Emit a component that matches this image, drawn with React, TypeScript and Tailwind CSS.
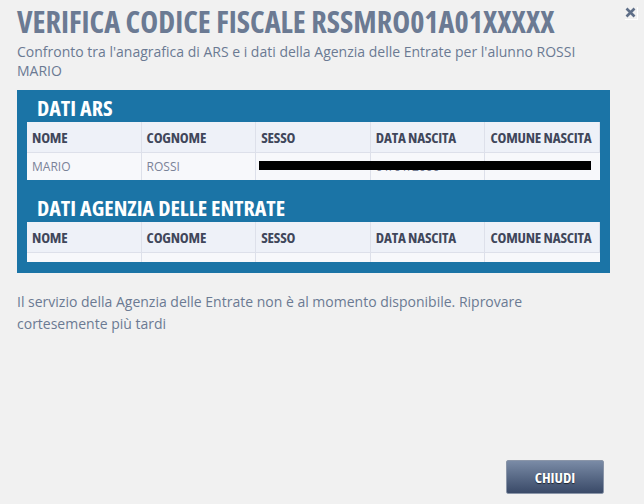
import React from 'react';

const columns = ['NOME', 'COGNOME', 'SESSO', 'DATA NASCITA', 'COMUNE NASCITA'];

const condensed = "font-['Open_Sans','DejaVu_Sans',sans-serif] font-bold font-stretch-condensed";

function DataTable({ values, rowHeight }: { values: string[]; rowHeight: string }) {
  return (
    <div className="relative mx-[10px] grid grid-cols-5 bg-[#f7f8fb]">
      {columns.map((col) => (
        <div
          key={col}
          className={`flex h-[31px] items-center whitespace-nowrap border-r border-b border-[#dde0ea] bg-[#eef1f8] px-[5px] text-[15px] tracking-[-0.2px] text-[#40465a] last:border-r-0 ${condensed}`}
        >
          {col}
        </div>
      ))}
      {values.map((v, i) => (
        <div
          key={i}
          className={`flex ${rowHeight} items-center border-r border-[#dde0ea] px-[5px] text-[12px] text-[#7a8298] last:border-r-0 font-['Open_Sans',sans-serif]`}
        >
          {v}
        </div>
      ))}
    </div>
  );
}

export default function App() {
  return (
    <div className="relative h-[504px] w-[644px] overflow-hidden bg-[#f1f1f1] font-['Open_Sans',sans-serif]">
      <button className="absolute right-[7px] top-[6px] flex h-[13px] w-[13px] items-center justify-center shadow-[1px_1px_0_#ffffff]">
        <svg width="11" height="11" viewBox="0 0 11 11">
          <path d="M1.5 1.5 L9.5 9.5 M9.5 1.5 L1.5 9.5" stroke="#5f6f88" strokeWidth="2.6" strokeLinecap="butt" />
        </svg>
      </button>

      <div className="pl-[17px] pr-[34px] pt-[3px]">
        <h1 className={`whitespace-nowrap text-[30.3px] leading-[38px] text-[#6b7a93] ${condensed}`}>
          VERIFICA CODICE FISCALE RSSMRO01A01XXXXX
        </h1>
        <p className="mt-[1px] text-[14px] leading-[19px] text-[#6b7a93]">
          Confronto tra l'anagrafica di ARS e i dati della Agenzia delle Entrate per l'alunno ROSSI MARIO
        </p>

        <div className="mt-[10px] bg-[#1b74a6] pb-[11px] pt-[3px]">
          <h2 className={`px-[20px] text-[22px] leading-[29px] text-white ${condensed}`}>DATI ARS</h2>
          <div className="relative">
            <DataTable values={['MARIO', 'ROSSI', '', '01/01/2000', '']} rowHeight="h-[27px]" />
            <div className="absolute left-[242px] top-[39px] h-[9px] w-[332px] bg-black" />
          </div>
          <h2 className={`mt-[13px] px-[20px] text-[22px] leading-[29px] text-white ${condensed}`}>
            DATI AGENZIA DELLE ENTRATE
          </h2>
          <DataTable values={['', '', '', '', '']} rowHeight="h-[9px]" />
        </div>

        <p className="mt-[18px] text-[14px] leading-[22px] text-[#6b7a93]">
          Il servizio della Agenzia delle Entrate non è al momento disponibile. Riprovare cortesemente più tardi
        </p>
      </div>

      <div className="absolute bottom-[10px] right-[40px]">
        <button
          className={`h-[34px] w-[98px] rounded-[2px] border border-[#8a95a8] bg-gradient-to-b from-[#7a8ba6] to-[#3a4a68] text-[15px] text-white [text-shadow:0_1px_1px_rgba(0,0,0,0.6)] ${condensed}`}
        >
          CHIUDI
        </button>
      </div>
    </div>
  );
}
